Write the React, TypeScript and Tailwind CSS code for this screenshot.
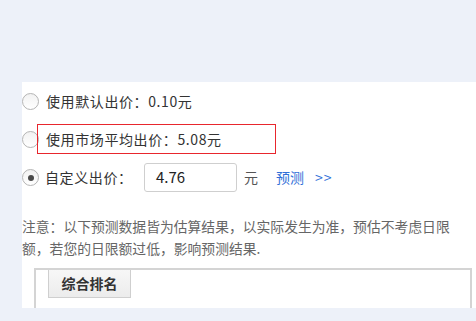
import React from "react";

function Radio({ checked = false }: { checked?: boolean }) {
  return (
    <span className="flex h-[17px] w-[17px] shrink-0 items-center justify-center rounded-full border border-[#b4b4b4] bg-gradient-to-b from-[#f2f2f2] to-white">
      {checked && <span className="h-[6px] w-[6px] rounded-full bg-[#4a4a4a]" />}
    </span>
  );
}

export default function App() {
  return (
    <div
      className="h-[321px] w-[476px] overflow-hidden bg-[#edf1f9] pl-[22px] pt-[82px] text-[#333]"
      style={{ fontFamily: '"Noto Sans CJK SC", "Liberation Sans", sans-serif' }}
    >
      <div className="h-[226px] overflow-hidden bg-white">
        {/* 出价选项 */}
        <div className="flex h-[38px] items-center">
          <Radio />
          <span className="ml-[7px] text-[14px] tracking-[0.6px]">使用默认出价：0.10元</span>
        </div>
        <div className="flex h-[38px] items-center">
          <Radio />
          <span className="-ml-[2px] flex h-[30px] w-[239px] items-center border border-[#e8262d] pl-[8px] text-[14px] tracking-[0.6px]">
            使用市场平均出价：5.08元
          </span>
        </div>
        <div className="flex h-[38px] items-center pt-[1px]">
          <Radio checked />
          <span className="ml-[6px] w-[99px] text-[14px] tracking-[0.6px]">自定义出价：</span>
          <div className="flex h-[29px] w-[93px] items-center rounded-[3px] border border-[#cfcfcf] pl-[11px] text-[15px] text-[#222]">
            4.76
          </div>
          <span className="ml-[7px] text-[14px] text-[#555]">元</span>
          <span className="ml-[18px] text-[14px] text-[#2f6fd8]">预测</span>
          <span className="ml-[11px] text-[14px] tracking-[1px] text-[#2f6fd8]">&gt;&gt;</span>
        </div>

        {/* 提示 */}
        <p className="mt-[19px] w-[452px] text-[13.8px] leading-[22px] text-[#666]">
          注意：以下预测数据皆为估算结果，以实际发生为准，预估不考虑日限额，若您的日限额过低，影响预测结果.
        </p>

        {/* 排名面板 */}
        <div className="ml-[12px] mt-[9px] h-[60px] w-[438px] border-2 border-[#d4d4d4] pl-[12px]">
          <div className="flex h-[28px] w-[83px] items-center justify-center border border-t-0 border-[#cfcfcf] bg-gradient-to-b from-[#f7f7f7] to-[#ececec] text-[14px] font-bold text-[#333]">
            综合排名
          </div>
        </div>
      </div>
    </div>
  );
}
